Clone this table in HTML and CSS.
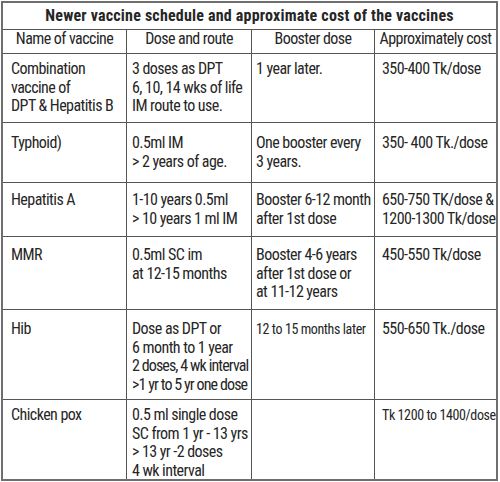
FILE: index.html
```html
<!DOCTYPE html>
<html>
<head>
<meta charset="utf-8">
<link rel="stylesheet" href="styles.css">
</head>
<body>
<div class="sheet">
  <div class="title">Newer vaccine schedule and approximate cost of the vaccines</div>

  <div class="cell head c1">Name of vaccine</div>
  <div class="cell head c2">Dose and route</div>
  <div class="cell head c3">Booster dose</div>
  <div class="cell head c4">Approximately cost</div>

  <div class="cell r1 c1">Combination<br>vaccine of<br>DPT &amp; Hepatitis B</div>
  <div class="cell r1 c2">3 doses as DPT<br>6, 10, 14 wks of life<br>IM route to use.</div>
  <div class="cell r1 c3">1 year later.</div>
  <div class="cell r1 c4">350-400 Tk/dose</div>

  <div class="cell r2 c1">Typhoid)</div>
  <div class="cell r2 c2">0.5ml IM<br>&gt; 2 years of age.</div>
  <div class="cell r2 c3">One booster every<br>3 years.</div>
  <div class="cell r2 c4">350- 400 Tk./dose</div>

  <div class="cell r3 c1">Hepatitis A</div>
  <div class="cell r3 c2">1-10 years 0.5ml<br>&gt; 10 years 1 ml IM</div>
  <div class="cell r3 c3">Booster 6-12 month<br>after 1st dose</div>
  <div class="cell r3 c4">650-750 TK/dose &amp;<br>1200-1300 Tk/dose</div>

  <div class="cell r4 c1">MMR</div>
  <div class="cell r4 c2">0.5ml SC im<br>at 12-15 months</div>
  <div class="cell r4 c3">Booster 4-6 years<br>after 1st dose or<br>at 11-12 years</div>
  <div class="cell r4 c4">450-550 Tk/dose</div>

  <div class="cell r5 c1">Hib</div>
  <div class="cell r5 c2">Dose as DPT or<br>6 month to 1 year<br><span class="tight">2 doses, 4 wk interval</span><br><span class="tight">&gt;1 yr to 5 yr one dose</span></div>
  <div class="cell r5 c3"><span class="small">12 to 15 months later</span></div>
  <div class="cell r5 c4">550-650 Tk./dose</div>

  <div class="cell r6 c1">Chicken pox</div>
  <div class="cell r6 c2">0.5 ml single dose<br>SC from 1 yr - 13 yrs<br>&gt; 13 yr -2 doses<br>4 wk interval</div>
  <div class="cell r6 c3"></div>
  <div class="cell r6 c4"><span class="small">Tk 1200 to 1400/dose</span></div>
</div>
</body>
</html>
```

FILE: styles.css
```css
html, body {
  margin: 0;
  padding: 0;
  background: #ffffff;
}

body {
  width: 500px;
  height: 482px;
  overflow: hidden;
}

.sheet {
  margin: 1px 0 0 1px;
  width: 493px;
  height: 476px;
  border: 2px solid #6e6e6e;
  background: #555555;
  display: grid;
  grid-template-columns: 123px 124px 122px 121px;
  grid-template-rows: 26px 23px 68px 59px 53px 72px 89px 1fr;
  gap: 1px;
  font-family: "Roboto Condensed", "Liberation Sans Narrow", "DejaVu Sans Condensed", "Liberation Sans", sans-serif;
  color: #262626;
  font-size: 16px;
  line-height: 18.5px;
  letter-spacing: -0.55px;
}

.title {
  grid-column: 1 / -1;
  background: #ffffff;
  font-weight: bold;
  font-size: 16px;
  letter-spacing: 0.2px;
  line-height: 20px;
  padding-top: 3px;
  text-align: center;
}

.cell {
  background: #ffffff;
  white-space: nowrap;
  overflow: hidden;
}

.head {
  text-align: center;
  padding: 0;
}

.c1 { padding-left: 8px; }
.c2 { padding-left: 5px; }
.c3 { padding-left: 4px; }
.c4 { padding-left: 7px; }

.head.c1, .head.c2, .head.c3, .head.c4 { padding-left: 0; }

.r1 { padding-top: 6px; }
.r2 { padding-top: 11px; }
.r3 { padding-top: 8px; }
.r4 { padding-top: 9px; }
.r5 { padding-top: 10px; }
.r6 { padding-top: 6px; }

.tight {
  letter-spacing: -0.9px;
}

.small {
  font-size: 14px;
  letter-spacing: -0.4px;
}
```
